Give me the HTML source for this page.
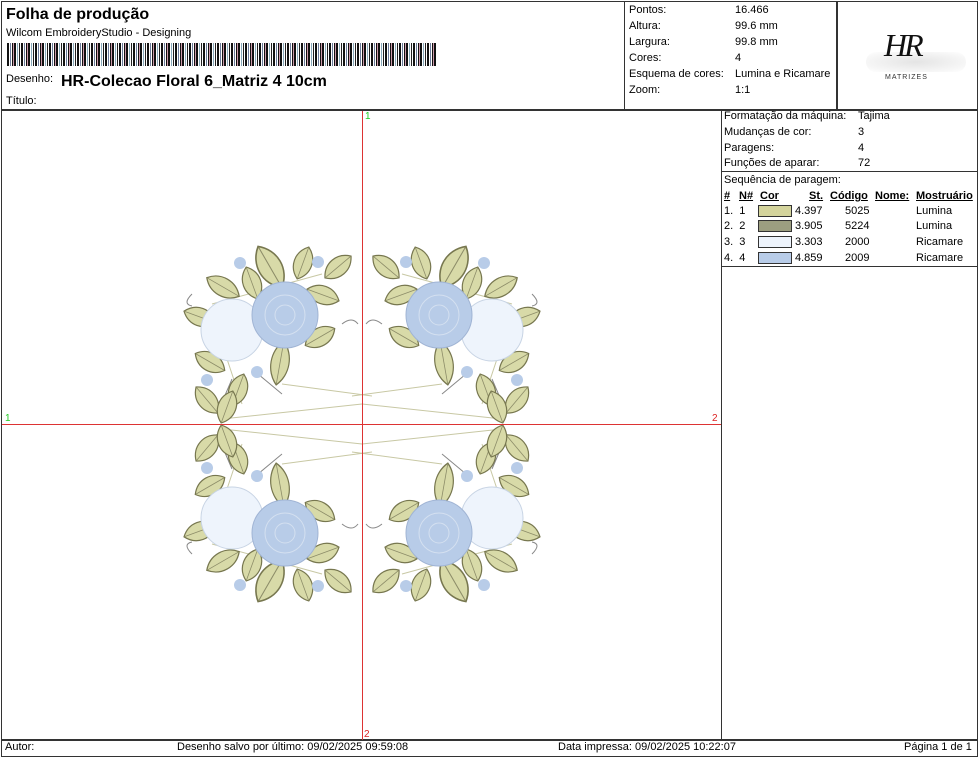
<!DOCTYPE html>
<html><head><meta charset="utf-8"><style>
body{margin:0;background:#fff;font-family:"Liberation Sans",sans-serif;color:#000}
.p{position:relative;width:980px;height:758px;overflow:hidden}
.a{position:absolute;white-space:nowrap;font-size:11px;line-height:13px}
.l{position:absolute;background:#333}
</style></head><body><div class="p">
<div class="l" style="left:1px;top:1px;width:977px;height:1px"></div>
<div class="l" style="left:1px;top:756px;width:977px;height:1px"></div>
<div class="l" style="left:1px;top:1px;width:1px;height:756px"></div>
<div class="l" style="left:977px;top:1px;width:1px;height:756px"></div>
<div class="l" style="left:1px;top:109px;width:977px;height:2px"></div>
<div class="l" style="left:624px;top:1px;width:1px;height:109px"></div>
<div class="l" style="left:836px;top:1px;width:2px;height:109px"></div>
<div class="l" style="left:721px;top:110px;width:1px;height:630px"></div>
<div class="l" style="left:722px;top:171px;width:256px;height:1px"></div>
<div class="l" style="left:722px;top:266px;width:256px;height:1px"></div>
<div class="l" style="left:1px;top:739px;width:977px;height:2px"></div>

<div class="a" style="left:6px;top:5px;font-size:16px;line-height:19px;font-weight:bold">Folha de produção</div>
<div class="a" style="left:6px;top:27px">Wilcom EmbroideryStudio - Designing</div>
<div style="position:absolute;left:7px;top:43px;width:429px;height:23px;background:repeating-linear-gradient(90deg,#111 0 2px,#fff 2px 3px,#6a7a9a 3px 4px,#fff 4px 5px,#111 5px 6px,#c9a 6px 7px,#111 7px 9px,#fff 9px 10px,#8ab 10px 11px,#fff 11px 12px,#222 12px 13px,#fff 13px 14px)"></div>
<div class="a" style="left:6px;top:73px">Desenho:</div>
<div class="a" style="left:61px;top:73px;font-size:16px;line-height:18px;font-weight:bold">HR-Colecao Floral 6_Matriz 4 10cm</div>
<div class="a" style="left:6px;top:95px">Título:</div>

<div class="a" style="left:629px;top:4px">Pontos:</div><div class="a" style="left:735px;top:4px">16.466</div>
<div class="a" style="left:629px;top:20px">Altura:</div><div class="a" style="left:735px;top:20px">99.6 mm</div>
<div class="a" style="left:629px;top:36px">Largura:</div><div class="a" style="left:735px;top:36px">99.8 mm</div>
<div class="a" style="left:629px;top:52px">Cores:</div><div class="a" style="left:735px;top:52px">4</div>
<div class="a" style="left:629px;top:68px">Esquema de cores:</div><div class="a" style="left:735px;top:68px">Lumina e Ricamare</div>
<div class="a" style="left:629px;top:84px">Zoom:</div><div class="a" style="left:735px;top:84px">1:1</div>

<div style="position:absolute;left:866px;top:52px;width:100px;height:20px;border-radius:12px;background:radial-gradient(ellipse,#e4e4e4,#f6f6f6 70%,#fff)"></div>
<div class="a" style="left:884px;top:28px;font-family:'Liberation Serif',serif;font-style:italic;font-size:32px;line-height:34px;letter-spacing:-3px;color:#111">HR</div>
<div class="a" style="left:885px;top:74px;font-size:7px;line-height:8px;letter-spacing:1px;color:#333">MATRIZES</div>

<div class="a" style="left:724px;top:110px">Formatação da máquina:</div><div class="a" style="left:858px;top:110px">Tajima</div>
<div class="a" style="left:724px;top:126px">Mudanças de cor:</div><div class="a" style="left:858px;top:126px">3</div>
<div class="a" style="left:724px;top:142px">Paragens:</div><div class="a" style="left:858px;top:142px">4</div>
<div class="a" style="left:724px;top:157px">Funções de aparar:</div><div class="a" style="left:858px;top:157px">72</div>
<div class="a" style="left:724px;top:174px">Sequência de paragem:</div>
<div class="a" style="left:724px;top:190px;font-weight:bold;text-decoration:underline">#</div>
<div class="a" style="left:739px;top:190px;font-weight:bold;text-decoration:underline">N#</div>
<div class="a" style="left:760px;top:190px;font-weight:bold;text-decoration:underline">Cor</div>
<div class="a" style="left:809px;top:190px;font-weight:bold;text-decoration:underline">St.</div>
<div class="a" style="left:830px;top:190px;font-weight:bold;text-decoration:underline">Código</div>
<div class="a" style="left:875px;top:190px;font-weight:bold;text-decoration:underline">Nome:</div>
<div class="a" style="left:916px;top:190px;font-weight:bold;text-decoration:underline">Mostruário</div>

<div class="a" style="left:724px;top:205px">1.&nbsp; 1</div><div style="position:absolute;left:758px;top:205px;width:32px;height:10px;border:1px solid #333;background:#d4d49c"></div><div class="a" style="left:795px;top:205px">4.397</div><div class="a" style="left:845px;top:205px">5025</div><div class="a" style="left:916px;top:205px">Lumina</div>
<div class="a" style="left:724px;top:220px">2.&nbsp; 2</div><div style="position:absolute;left:758px;top:220px;width:32px;height:10px;border:1px solid #333;background:#9c9e80"></div><div class="a" style="left:795px;top:220px">3.905</div><div class="a" style="left:845px;top:220px">5224</div><div class="a" style="left:916px;top:220px">Lumina</div>
<div class="a" style="left:724px;top:236px">3.&nbsp; 3</div><div style="position:absolute;left:758px;top:236px;width:32px;height:10px;border:1px solid #333;background:#eef4fc"></div><div class="a" style="left:795px;top:236px">3.303</div><div class="a" style="left:845px;top:236px">2000</div><div class="a" style="left:916px;top:236px">Ricamare</div>
<div class="a" style="left:724px;top:252px">4.&nbsp; 4</div><div style="position:absolute;left:758px;top:252px;width:32px;height:10px;border:1px solid #333;background:#b8cce8"></div><div class="a" style="left:795px;top:252px">4.859</div><div class="a" style="left:845px;top:252px">2009</div><div class="a" style="left:916px;top:252px">Ricamare</div>

<div class="a" style="left:5px;top:741px;font-size:11px">Autor:</div>
<div class="a" style="left:177px;top:741px">Desenho salvo por último: 09/02/2025 09:59:08</div>
<div class="a" style="left:558px;top:741px">Data impressa: 09/02/2025 10:22:07</div>
<div class="a" style="left:904px;top:741px">Página 1 de 1</div>

<svg style="position:absolute;left:0;top:0" width="980" height="758">
<defs>
<g id="lf"><path d="M0,-17 C12,-8 12,8 0,17 C-12,8 -12,-8 0,-17Z" fill="#d8daa8" stroke="#77774f" stroke-width="1.2"/><path d="M0,-16 L0,16" stroke="#8c8c68" stroke-width=".8"/></g>
<g id="q">
<g stroke="#c8c8a4" stroke-width="1" fill="none"><path d="M-80,-40 L10,-28 M-145,-95 L-120,-20 M-150,-120 L-40,-150 M-140,-5 L0,-20"/></g>
<g stroke="#888" fill="none" stroke-width="1"><path d="M-170,-130 q-10,10 0,12 M-20,-100 q10,-8 16,0 M-130,-45 L-145,-10 M-110,-55 L-80,-30"/></g>
<use href="#lf" transform="translate(-92,-157) rotate(-30) scale(1.3,1.4)"/>
<use href="#lf" transform="translate(-139,-137) rotate(-60) scale(1,1.1)"/>
<use href="#lf" transform="translate(-110,-141) rotate(-20)"/>
<use href="#lf" transform="translate(-59,-161) rotate(20)"/>
<use href="#lf" transform="translate(-24,-157) rotate(50)"/>
<use href="#lf" transform="translate(-39,-129) rotate(-70)"/>
<use href="#lf" transform="translate(-162,-107) rotate(-70)"/>
<use href="#lf" transform="translate(-42,-87) rotate(60)"/>
<use href="#lf" transform="translate(-82,-61) rotate(10) scale(1,1.3)"/>
<use href="#lf" transform="translate(-152,-62) rotate(-60)"/>
<use href="#lf" transform="translate(-124,-34) rotate(20)"/>
<use href="#lf" transform="translate(-155,-24) rotate(-40)"/>
<use href="#lf" transform="translate(-135,-17) rotate(20)"/>
<circle cx="-130" cy="-94" r="31" fill="#eef4fc" stroke="#c8d4e4"/>
<circle cx="-77" cy="-109" r="33" fill="#b8cce8" stroke="#a0b4d4"/>
<g fill="none" stroke="#d4e0f0" stroke-width="1"><circle cx="-77" cy="-109" r="10"/><circle cx="-77" cy="-109" r="20"/></g>
<g fill="#b8cce8"><circle cx="-122" cy="-161" r="6"/><circle cx="-44" cy="-162" r="6"/><circle cx="-105" cy="-52" r="6"/><circle cx="-155" cy="-44" r="6"/></g>
</g>
</defs>
<g transform="translate(362,424)">
<use href="#q"/>
<use href="#q" transform="scale(-1,1)"/>
<use href="#q" transform="scale(1,-1)"/>
<use href="#q" transform="scale(-1,-1)"/>
</g>
<line x1="362.5" y1="111" x2="362.5" y2="740" stroke="#d33" stroke-width="1"/>
<line x1="2" y1="424.5" x2="721" y2="424.5" stroke="#d33" stroke-width="1"/>
<text x="365" y="119" font-size="10" fill="#2c2" font-family="Liberation Sans">1</text>
<text x="5" y="421" font-size="10" fill="#2c2" font-family="Liberation Sans">1</text>
<text x="712" y="421" font-size="10" fill="#d22" font-family="Liberation Sans">2</text>
<text x="364" y="737" font-size="10" fill="#d22" font-family="Liberation Sans">2</text>
</svg>
</div></body></html>
